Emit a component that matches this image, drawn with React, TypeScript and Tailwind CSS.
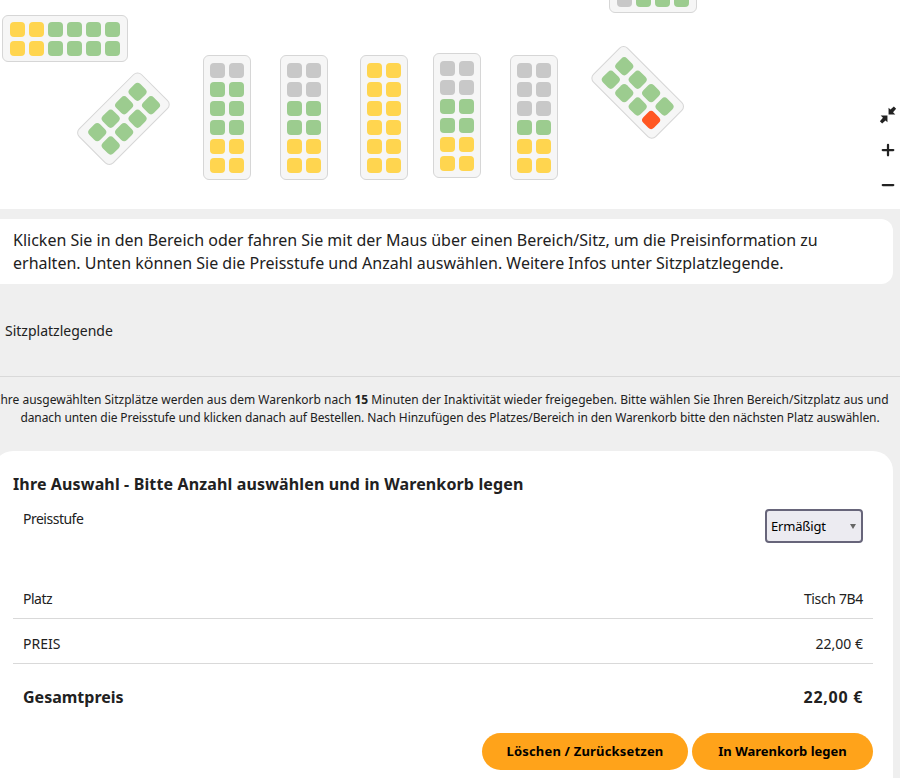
import { Minus, Plus } from "lucide-react";

type Seat = "y" | "g" | "x" | "r";

const seatColors: Record<Seat, string> = {
  y: "bg-[#ffd54f]",
  g: "bg-[#9ccc8f]",
  x: "bg-[#c8c8c8]",
  r: "bg-[#ff5722]",
};

type Table = {
  id: string;
  className: string;
  cols: number;
  seats: Seat[];
};

const wide = "px-[6.7px] py-[5.7px]";
const tall = "px-[5.7px] py-[6.7px]";
const diagonal = "px-[7.7px] py-[6.7px]";

const tables: Table[] = [
  { id: "t1", className: `left-[2.3px] top-[15px] ${wide}`, cols: 6, seats: ["y", "y", "g", "g", "g", "g", "y", "y", "g", "g", "g", "g"] },
  { id: "t2", className: `left-[79.3px] top-[94.3px] -rotate-45 ${diagonal}`, cols: 4, seats: ["g", "g", "g", "g", "g", "g", "g", "g"] },
  { id: "t3", className: `left-[203.3px] top-[55px] ${tall}`, cols: 2, seats: ["x", "x", "g", "g", "g", "g", "g", "g", "y", "y", "y", "y"] },
  { id: "t4", className: `left-[280.3px] top-[55px] ${tall}`, cols: 2, seats: ["x", "x", "x", "x", "g", "g", "g", "g", "y", "y", "y", "y"] },
  { id: "t5", className: `left-[360.3px] top-[55px] ${tall}`, cols: 2, seats: ["y", "y", "y", "y", "y", "y", "y", "y", "y", "y", "y", "y"] },
  { id: "t6", className: `left-[433.3px] top-[53px] ${tall}`, cols: 2, seats: ["x", "x", "x", "x", "g", "g", "g", "g", "y", "y", "y", "y"] },
  { id: "t7", className: `left-[510.3px] top-[55px] ${tall}`, cols: 2, seats: ["x", "x", "x", "x", "x", "x", "g", "g", "y", "y", "y", "y"] },
  { id: "t8", className: `left-[593.3px] top-[68.3px] rotate-45 ${diagonal}`, cols: 4, seats: ["g", "g", "g", "g", "g", "g", "g", "r"] },
  { id: "t9", className: `left-[609.3px] top-[-34px] ${wide}`, cols: 4, seats: ["g", "g", "g", "g", "x", "g", "g", "g"] },
];

function SeatTable({ table }: { table: Table }) {
  return (
    <div
      className={`absolute grid gap-1 rounded-md border border-[#d6d6d6] bg-[#f6f6f6] ${table.className}`}
      style={{ gridTemplateColumns: `repeat(${table.cols}, 15px)` }}
    >
      {table.seats.map((seat, i) => (
        <div key={i} className={`h-[15px] w-[15px] rounded-[4px] ${seatColors[seat]}`} />
      ))}
    </div>
  );
}

export default function App() {
  return (
    <div className="h-[778px] w-[900px] overflow-hidden bg-[#efefef] font-['Noto_Sans',sans-serif] text-[#212121]">
      <div className="relative h-[209px] overflow-hidden bg-white">
        {tables.map((t) => (
          <SeatTable key={t.id} table={t} />
        ))}
        <div className="absolute right-[3px] top-[106px] flex flex-col items-center gap-[17px] text-[#222222]">
          <svg width="18" height="18" viewBox="0 0 16 16" fill="currentColor">
            <path d="M7.500 8.500V14.500L5.800 12.800L2.800 15.500L0.800 13.500L3.500 10.500L1.500 8.500Z" />
            <path d="M8.500 7.500V1.500L10.200 3.200L13.200 0.500L15.200 2.500L12.500 5.500L14.500 7.500Z" />
          </svg>
          <Plus size={18} strokeWidth={3} />
          <Minus size={18} strokeWidth={3} />
        </div>
      </div>

      <div className="mt-[10px] mr-[7px] rounded-r-[12px] bg-white px-[13px] pb-[9px] pt-[10px] text-base leading-[23px]">
        Klicken Sie in den Bereich oder fahren Sie mit der Maus über einen Bereich/Sitz, um die Preisinformation zu erhalten. Unten können Sie die Preisstufe und Anzahl auswählen. Weitere Infos unter Sitzplatzlegende.
      </div>

      <div className="h-[93px] border-b border-[#d9d9d9] pl-[5px] pt-[37px] text-sm leading-[20px]">Sitzplatzlegende</div>

      <div className="whitespace-nowrap pt-[14px] text-center text-xs leading-[18px]">
        <div className="-ml-[13px] -mr-[13px] flex justify-center pr-[15px]">
          <span>
            Ihre ausgewählten Sitzplätze werden aus dem Warenkorb nach <b>15</b> Minuten der Inaktivität wieder freigegeben. Bitte wählen Sie Ihren Bereich/Sitzplatz aus und
          </span>
        </div>
        <div className="tracking-[-0.085px]">danach unten die Preisstufe und klicken danach auf Bestellen. Nach Hinzufügen des Platzes/Bereich in den Warenkorb bitte den nächsten Platz auswählen.</div>
      </div>

      <div className="-ml-[7px] mr-[7px] mt-[24px] h-[327px] rounded-t-[20px] bg-white pl-[20px] pr-[20px] pt-[22px]">
        <h2 className="text-base font-bold leading-[22px] tracking-[0.14px]">Ihre Auswahl - Bitte Anzahl auswählen und in Warenkorb legen</h2>
        <div className="flex h-[79px] items-start justify-between px-[10px] pt-[14px] text-sm">
          <span className="leading-[20px] tracking-[-0.5px]">Preisstufe</span>
          <div className="relative flex h-[34px] w-[98px] items-center rounded-[4px] border-2 border-[#67657a] bg-[#ecebf1] pl-[4px] text-[13px] tracking-[-0.2px] text-black">
            Ermäßigt
            <span className="absolute right-[5px] top-[13px] h-0 w-0 border-x-[3px] border-t-[5px] border-x-transparent border-t-[#666666]" />
          </div>
        </div>
        <div className="flex h-[45px] items-center justify-between border-b border-[#d9d9d9] px-[10px] pt-[6px] text-sm">
          <span className="tracking-[-0.5px]">Platz</span>
          <span className="tracking-[-0.35px]">Tisch 7B4</span>
        </div>
        <div className="flex h-[45px] items-center justify-between border-b border-[#d9d9d9] px-[10px] pt-[6px] text-sm">
          <span>PREIS</span>
          <span>22,00 €</span>
        </div>
        <div className="flex h-[66px] items-center justify-between px-[10px] text-base font-bold">
          <span>Gesamtpreis</span>
          <span className="tracking-[0.7px]">22,00 €</span>
        </div>
        <div className="mt-[3px] flex justify-end gap-1 text-[13px] font-bold text-black">
          <button className="h-[37px] w-[206px] rounded-full bg-[#ffa31a] tracking-[0.18px]">Löschen / Zurücksetzen</button>
          <button className="h-[37px] w-[181px] rounded-full bg-[#ffa31a]">In Warenkorb legen</button>
        </div>
      </div>
    </div>
  );
}
